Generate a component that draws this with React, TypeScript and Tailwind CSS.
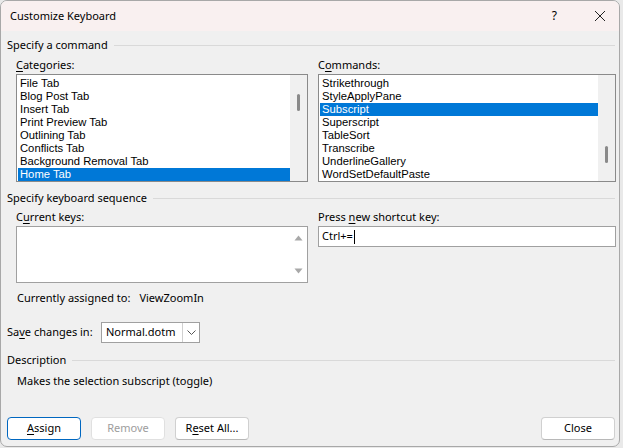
import React from "react";

const ui = { fontFamily: '"Noto Sans", "Open Sans", sans-serif' };
const list = { fontFamily: '"Liberation Sans", Arial, sans-serif' };

function U({ children }: { children: React.ReactNode }) {
  return <span className="underline underline-offset-2">{children}</span>;
}

function SectionHeader({ title, className }: { title: string; className?: string }) {
  return (
    <div className={"flex items-center h-[14px] " + (className ?? "")}>
      <span className="leading-[14px] whitespace-nowrap">{title}</span>
      <div className="flex-1 h-px bg-[#d9d9d9] ml-[6px] mr-[4px]" />
    </div>
  );
}

function ListBox({ items, selected, thumbTop }: { items: string[]; selected: number; thumbTop: number }) {
  return (
    <div className="flex h-[108px] border border-[#8a8a8a] bg-white" style={list}>
      <div className="flex-1 pt-[2px] pl-[1px]">
        {items.map((it, i) => (
          <div
            key={it}
            className={
              "h-[13px] leading-[13px] pl-[2px] text-[11.25px] whitespace-nowrap " +
              (i === selected ? "bg-[#0078d7] text-white" : "text-black")
            }
          >
            {it}
          </div>
        ))}
      </div>
      <div className="w-[17px] bg-[#f0f0f0] relative">
        <div className="absolute left-[7px] w-[3px] h-[17px] rounded-sm bg-[#8a8a8a]" style={{ top: thumbTop }} />
      </div>
    </div>
  );
}

function Btn({ children, variant }: { children: React.ReactNode; variant?: "primary" | "disabled" }) {
  const cls =
    variant === "primary"
      ? "border-[#0067c0] text-black"
      : variant === "disabled"
      ? "border-[#e0e0e0] text-[#9d9d9d]"
      : "border-[#d0d0d0] border-b-[#b8b8b8] text-black";
  return (
    <div
      className={
        "w-[74px] h-[23px] flex items-center justify-center rounded-[4px] border bg-white text-[11px] " + cls
      }
    >
      {children}
    </div>
  );
}

export default function App() {
  const categories = [
    "File Tab",
    "Blog Post Tab",
    "Insert Tab",
    "Print Preview Tab",
    "Outlining Tab",
    "Conflicts Tab",
    "Background Removal Tab",
    "Home Tab",
  ];
  const commands = [
    "Strikethrough",
    "StyleApplyPane",
    "Subscript",
    "Superscript",
    "TableSort",
    "Transcribe",
    "UnderlineGallery",
    "WordSetDefaultPaste",
  ];
  return (
    <div className="w-[623px] h-[448px] bg-[#e9e9e9] overflow-hidden" style={ui}>
      <div className="w-[620px] h-[447px] bg-[#f0f0f0] border border-[#a8a8a8] rounded-[7px] overflow-hidden flex flex-col text-[11px] text-black">
        {/* title bar */}
        <div className="h-[30px] shrink-0 bg-[#f9f0f0] flex items-center pl-[9px]">
          <span className="text-[11px]">Customize Keyboard</span>
          <div className="flex-1" />
          <span className="text-[12px] mr-[37px]">?</span>
          <svg width="12" height="12" viewBox="0 0 12 12" className="mr-[13px]">
            <path d="M1 1 L11 11 M11 1 L1 11" stroke="#222" strokeWidth="1" />
          </svg>
        </div>

        <div className="flex flex-col pl-[6px]">
          <SectionHeader title="Specify a command" className="mt-[7px]" />
          <div className="flex mt-[6px] pl-[9px] pr-[3px] gap-[10px]">
            <div className="w-[292px] flex flex-col">
              <div className="h-[14px] leading-[14px]">
                <U>C</U>ategories:
              </div>
              <div className="mt-[2px]">
                <ListBox items={categories} selected={7} thumbTop={19} />
              </div>
            </div>
            <div className="flex-1 flex flex-col">
              <div className="h-[14px] leading-[14px]">
                C<U>o</U>mmands:
              </div>
              <div className="mt-[2px]">
                <ListBox items={commands} selected={2} thumbTop={71} />
              </div>
            </div>
          </div>

          <SectionHeader title="Specify keyboard sequence" className="mt-[9px]" />
          <div className="flex mt-[5px] pl-[9px] pr-[3px] gap-[10px]">
            <div className="w-[292px] flex flex-col">
              <div className="h-[14px] leading-[14px]">
                C<U>u</U>rrent keys:
              </div>
              <div className="mt-[2px] h-[57px] border border-[#a0a0a0] bg-white flex">
                <div className="flex-1" />
                <div className="w-[17px] flex flex-col items-center justify-between py-[8px]">
                  <svg width="9" height="6" viewBox="0 0 9 6">
                    <path d="M0.5 5.5 L4.5 0.5 L8.5 5.5 Z" fill="#a8a8a8" />
                  </svg>
                  <svg width="9" height="6" viewBox="0 0 9 6">
                    <path d="M0.5 0.5 L4.5 5.5 L8.5 0.5 Z" fill="#a8a8a8" />
                  </svg>
                </div>
              </div>
            </div>
            <div className="flex-1 flex flex-col">
              <div className="h-[14px] leading-[14px]">
                Press <U>n</U>ew shortcut key:
              </div>
              <div className="mt-[2px] h-[21px] border border-[#a0a0a0] bg-white flex items-center pl-[3px]">
                <span className="text-[11px]">Ctrl+=</span>
                <span className="w-px h-[14px] bg-black ml-px" />
              </div>
            </div>
          </div>

          <div className="flex h-[14px] leading-[14px] mt-[8px] pl-[10px]">
            <span>Currently assigned to:</span>
            <span className="ml-[9px]">ViewZoomIn</span>
          </div>

          <div className="flex items-center mt-[17px] h-[21px]">
            <span className="w-[94px]">
              Sa<U>v</U>e changes in:
            </span>
            <div className="w-[99px] h-[21px] border border-[#a0a0a0] bg-white flex">
              <div className="flex-1 flex items-center pl-[4px]">Normal.dotm</div>
              <div className="w-[17px] border-l border-[#d0d0d0] flex items-center justify-center">
                <svg width="9" height="5" viewBox="0 0 9 5">
                  <path d="M0.5 0.5 L4.5 4.5 L8.5 0.5" stroke="#555" strokeWidth="1" fill="none" />
                </svg>
              </div>
            </div>
          </div>

          <SectionHeader title="Description" className="mt-[10px]" />
          <div className="h-[14px] leading-[14px] mt-[7px] pl-[10px]">Makes the selection subscript (toggle)</div>

          <div className="flex mt-[29px] pr-[4px] gap-[10px]">
            <Btn variant="primary">
              <U>A</U>ssign
            </Btn>
            <Btn variant="disabled">Remove</Btn>
            <Btn>
              R<U>e</U>set All...
            </Btn>
            <div className="flex-1" />
            <Btn>Close</Btn>
          </div>
        </div>
      </div>
    </div>
  );
}
